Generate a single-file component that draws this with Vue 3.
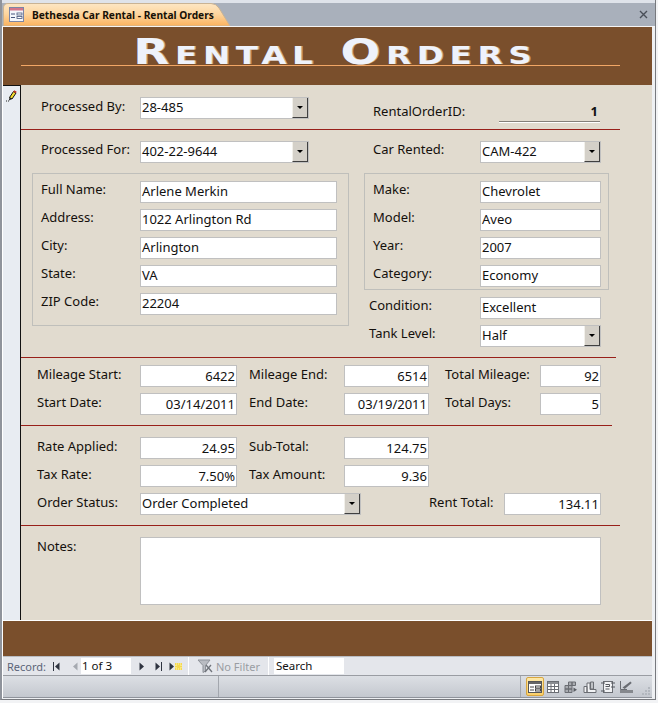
<script setup>
const personFields = [
  { label: 'Full Name:', value: 'Arlene Merkin' },
  { label: 'Address:', value: '1022 Arlington Rd' },
  { label: 'City:', value: 'Arlington' },
  { label: 'State:', value: 'VA' },
  { label: 'ZIP Code:', value: '22204' },
]
const carFields = [
  { label: 'Make:', value: 'Chevrolet' },
  { label: 'Model:', value: 'Aveo' },
  { label: 'Year:', value: '2007' },
  { label: 'Category:', value: 'Economy' },
]
const mileage = [
  ['Mileage Start:', '6422', 'Mileage End:', '6514', 'Total Mileage:', '92'],
  ['Start Date:', '03/14/2011', 'End Date:', '03/19/2011', 'Total Days:', '5'],
]
const rates = [
  ['Rate Applied:', '24.95', 'Sub-Total:', '124.75'],
  ['Tax Rate:', '7.50%', 'Tax Amount:', '9.36'],
]
</script>

<template>
  <div class="window">
    <div class="tabstrip">
      <div class="tab">
        <svg class="tab-bg" width="228" height="23" viewBox="0 0 228 23">
          <defs>
            <linearGradient id="tabgrad" x1="0" y1="0" x2="0" y2="1">
              <stop offset="0" stop-color="#fde6c4" />
              <stop offset="0.45" stop-color="#fdd6a0" />
              <stop offset="1" stop-color="#fbb25e" />
            </linearGradient>
          </defs>
          <path d="M0.5 23V5Q0.5 0.5 5 0.5H208Q213 0.5 216 5L227 23Z" fill="url(#tabgrad)" stroke="#c9b394" />
        </svg>
        <svg class="tab-icon" width="15" height="15" viewBox="0 0 15 15">
          <rect x="0.5" y="0.5" width="14" height="14" fill="#f4f6fb" stroke="#7b86a6" />
          <rect x="1" y="1" width="13" height="2.500" fill="#d3758a" />
          <path d="M2 7h4M2 10.500h4" stroke="#47557c" />
          <rect x="8" y="6" width="5" height="2" fill="#fff" stroke="#47557c" stroke-width="0.8" />
          <rect x="8" y="9.500" width="5" height="2" fill="#fff" stroke="#47557c" stroke-width="0.8" />
        </svg>
        <span class="tab-title">Bethesda Car Rental - Rental Orders</span>
      </div>
      <svg class="close" width="9" height="9" viewBox="0 0 9 9">
        <path d="M1 1l7 7M8 1l-7 7" stroke="#4a4f58" stroke-width="1.4" />
      </svg>
    </div>

    <div class="form">
      <header class="form-head">
        <h1 class="title">Rental Orders</h1>
        <div class="head-rule"></div>
      </header>

      <div class="detail">
        <aside class="selector">
          <svg width="11" height="12" viewBox="0 0 11 12">
            <path d="M3.500 7.500L7.500 1.500l2.500 1.500-4 6z" fill="#f6dc2e" stroke="#111" stroke-width="1" />
            <path d="M7.800 1l2.500 1.500" stroke="#c03020" stroke-width="1.600" />
            <path d="M3.500 7.500L3 10.500l2.800-1.500z" fill="#111" />
            <path d="M0 11h1M2 11h1" stroke="#222" />
          </svg>
        </aside>

        <main class="content">
          <section class="sec sec-a line-a">
            <div class="row col-left">
              <label class="lab lab-99">Processed By:</label>
              <div class="combo w-169"><span class="val">28-485</span><span class="drop"></span></div>
            </div>
            <div class="row order-id">
              <label class="lab lab-126">RentalOrderID:</label>
              <div class="id-value">1</div>
            </div>
          </section>

          <section class="sec sec-b line-b">
            <div class="left">
              <div class="row indent-20">
                <label class="lab lab-99">Processed For:</label>
                <div class="combo w-169"><span class="val">402-22-9644</span><span class="drop"></span></div>
              </div>
              <div class="group group-person">
                <div v-for="f in personFields" :key="f.label" class="row">
                  <label class="lab lab-99">{{ f.label }}</label>
                  <div class="field w-197">{{ f.value }}</div>
                </div>
              </div>
            </div>
            <div class="right">
              <div class="row indent-9">
                <label class="lab lab-107">Car Rented:</label>
                <div class="combo w-121"><span class="val">CAM-422</span><span class="drop"></span></div>
              </div>
              <div class="group group-car">
                <div v-for="f in carFields" :key="f.label" class="row">
                  <label class="lab lab-107">{{ f.label }}</label>
                  <div class="field w-121">{{ f.value }}</div>
                </div>
              </div>
              <div class="row indent-5 cond">
                <label class="lab lab-111">Condition:</label>
                <div class="field w-121">Excellent</div>
              </div>
              <div class="row indent-5 tank">
                <label class="lab lab-111">Tank Level:</label>
                <div class="combo w-121"><span class="val">Half</span><span class="drop"></span></div>
              </div>
            </div>
          </section>

          <section class="sec sec-c line-c">
            <div v-for="r in mileage" :key="r[0]" class="row">
              <label class="lab lab-103">{{ r[0] }}</label>
              <div class="field num w-97">{{ r[1] }}</div>
              <label class="lab lab-mid">{{ r[2] }}</label>
              <div class="field num w-85">{{ r[3] }}</div>
              <label class="lab lab-last">{{ r[4] }}</label>
              <div class="field num w-61">{{ r[5] }}</div>
            </div>
          </section>

          <section class="sec sec-d line-d">
            <div v-for="r in rates" :key="r[0]" class="row">
              <label class="lab lab-103">{{ r[0] }}</label>
              <div class="field num w-97">{{ r[1] }}</div>
              <label class="lab lab-mid">{{ r[2] }}</label>
              <div class="field num w-85">{{ r[3] }}</div>
            </div>
            <div class="row">
              <label class="lab lab-103">Order Status:</label>
              <div class="combo w-221"><span class="val">Order Completed</span><span class="drop"></span></div>
              <label class="lab lab-rent">Rent Total:</label>
              <div class="field num w-97">134.11</div>
            </div>
          </section>

          <section class="sec sec-e">
            <label class="lab lab-103 notes-lab">Notes:</label>
            <div class="notes"></div>
          </section>
        </main>
      </div>

      <div class="form-foot"></div>

      <nav class="navbar">
        <span class="rec">Record:</span>
        <svg class="nav-i first" width="7" height="9" viewBox="0 0 7 9"><path d="M0.5 0v9" stroke="#2f3440" /><path d="M6.500 0.500v8L2 4.500z" fill="#2f3440" /></svg>
        <svg class="nav-i prev" width="6" height="9" viewBox="0 0 6 9"><path d="M5.500 0.500v8L1 4.500z" fill="#a5a9b0" /></svg>
        <div class="rec-box">1 of 3</div>
        <svg class="nav-i next" width="6" height="9" viewBox="0 0 6 9"><path d="M0.500 0.500v8L5 4.500z" fill="#2f3440" /></svg>
        <svg class="nav-i last" width="7" height="9" viewBox="0 0 7 9"><path d="M0.500 0.500v8L5 4.500z" fill="#2f3440" /><path d="M6.500 0v9" stroke="#2f3440" /></svg>
        <svg class="nav-i new" width="13" height="9" viewBox="0 0 13 9"><path d="M0.500 0.500v8L5 4.500z" fill="#2f3440" /><rect x="6" y="1" width="7" height="7" fill="#f5d94f" /><path d="M7 2h5v5H7z" fill="none" stroke="#fff6b8" stroke-dasharray="1 1" /></svg>
        <span class="nav-sep sep-a"></span>
        <svg class="funnel" width="17" height="14" viewBox="0 0 17 14"><path d="M1 1h12L8.500 6.500V12L6 13.500V6.500z" fill="#b9bcc2" stroke="#8e9299" /><path d="M9 6l6 7M14 6l-6 7" stroke="#70747b" stroke-width="1.3" /></svg>
        <span class="nofilter">No Filter</span>
        <span class="nav-sep sep-b"></span>
        <div class="search">Search</div>
      </nav>

      <footer class="status">
        <span class="st-sep st-a"></span>
        <span class="st-sep st-b"></span>
        <div class="views">
          <span class="view active">
            <svg width="14" height="12" viewBox="0 0 14 12"><rect x="0.500" y="0.500" width="13" height="11" fill="#fff" stroke="#555" /><rect x="1" y="1" width="12" height="2" fill="#666" /><path d="M2 6h4M2 9h4" stroke="#444" /><rect x="7.500" y="5" width="5" height="2" fill="none" stroke="#444" /><rect x="7.500" y="8" width="5" height="2" fill="none" stroke="#444" /></svg>
          </span>
          <span class="view">
            <svg width="12" height="12" viewBox="0 0 12 12"><rect x="0.500" y="0.500" width="11" height="11" fill="#fff" stroke="#6a6d73" /><rect x="1" y="1" width="10" height="2" fill="#8a8d92" /><path d="M1 5.500h10M1 8.500h10M4 3v8M7.500 3v8" stroke="#6a6d73" /></svg>
          </span>
          <span class="view">
            <svg width="14" height="12" viewBox="0 0 14 12"><path d="M1 4.500h3.500v3.500H1zM4.500 4.500H8v3.500H4.500zM1 8h3.500v3.500H1zM4.500 8H8v3.500H4.500zM4.500 1H8v3.500H4.500zM8 1h3.500v3.500H8z" fill="#a9acb1" stroke="#6a6d73" /><path d="M9.500 6.500v4.500l3.500-2.300z" fill="#5a5d63" /></svg>
          </span>
          <span class="view">
            <svg width="14" height="12" viewBox="0 0 14 12"><path d="M1 11.500V5.500h3V11.500zM4 11.500V2h3V8.500h6v3z" fill="#f2f3f5" stroke="#6a6d73" /><path d="M7.500 1h3v7h-3z" fill="#bfc2c6" stroke="#6a6d73" /></svg>
          </span>
          <span class="view">
            <svg width="14" height="12" viewBox="0 0 14 12"><rect x="2.500" y="0.500" width="9" height="11" fill="#f2f3f5" stroke="#6a6d73" /><path d="M0 2h4M0 10h4M10 2h4M10 6h4M4.500 3.500h4v2h-4M4.500 8h4" fill="none" stroke="#55585e" /></svg>
          </span>
          <span class="view">
            <svg width="14" height="12" viewBox="0 0 14 12"><path d="M1.500 0v8.500H8" fill="none" stroke="#6a6d73" /><path d="M3.500 6.500L11.500 0.500l1.200 1.500-7 6z" fill="#6a6d73" /><rect x="1" y="9" width="13" height="3" fill="#85888d" /></svg>
          </span>
        </div>
        <svg class="grip" width="11" height="11" viewBox="0 0 11 11"><path d="M8 1h2v2H8zM5 4h2v2H5zM8 4h2v2H8zM2 7h2v2H2zM5 7h2v2H5zM8 7h2v2H8z" fill="#b2b7be" /></svg>
      </footer>
    </div>
  </div>
</template>

<style>
html, body { margin: 0; background: #f2f3f5; }
</style>

<style scoped>
* { box-sizing: border-box; }
.window {
  width: 656px;
  height: 700px;
  background: #eef0f3;
  border-left: 2px solid #8f939b;
  border-right: 1px solid #77797e;
  border-bottom: 1px solid #77797e;
  font-family: "Noto Sans", sans-serif;
  font-size: 13px;
  color: #111;
  overflow: hidden;
}
.tabstrip {
  height: 27px;
  padding-top: 3px;
  position: relative;
  background: linear-gradient(#dfe3ea 0, #dfe3ea 3px, #a9b0bb 3px);
  border-bottom: 1px solid #f5f5f5;
}
.tab {
  position: relative;
  width: 228px;
  height: 23px;
  display: flex;
  align-items: center;
  margin-left: 1px;
}
.tab-bg { position: absolute; left: 0; top: 0; }
.tab-icon { position: relative; margin-left: 6px; }
.tab-title {
  position: relative;
  margin-left: 8px;
  font-weight: 700;
  font-size: 10.2px;
  color: #161006;
  white-space: nowrap;
}
.close { position: absolute; right: 7px; top: 10px; }

.form {
  width: 650px;
  border-left: 1px solid #fff;
  background: #e1dbcf;
}
.form-head {
  height: 58px;
  background: #7a4f2c;
  position: relative;
  overflow: hidden;
}
.title {
  margin: 0;
  width: 100%;
  text-align: center;
  font-family: "DejaVu Sans", sans-serif;
  font-weight: 700;
  font-variant: small-caps;
  font-size: 36px;
  line-height: 38px;
  padding: 6px 0 0 12px;
  letter-spacing: 4.4px;
  color: #eef2fb;
  text-shadow: 1px 0 0 #c9a27d;
  transform: scaleX(1.3);
  white-space: nowrap;
}
.head-rule {
  position: absolute;
  left: 18px;
  width: 599px;
  top: 38px;
  height: 1px;
  background: #f2a766;
}
.detail { display: flex; height: 535px; }
.selector {
  width: 18px;
  background: #e8ecf2;
  border-top: 1px solid #111;
  border-right: 1px solid #111;
  padding: 2px 0 0 3px;
  flex: none;
}
.content { flex: 1; min-width: 0; }

.sec { position: relative; }
.sec::after {
  content: "";
  position: absolute;
  left: 0;
  bottom: 0;
  height: 1px;
  background: #98201a;
}
.line-a::after { width: 599px; }
.line-b::after { width: 595px; }
.line-c::after { width: 591px; }
.line-d::after { width: 599px; }

.sec-a { height: 45px; padding: 12px 0 0 20px; display: flex; }
.col-left { width: 332px; }
.sec-b { height: 228px; padding-top: 11px; display: flex; }
.left { width: 328px; }
.right { margin-left: 15px; }
.sec-c { height: 68px; padding: 7px 0 0 16px; display: flex; flex-direction: column; gap: 6px; }
.sec-d { height: 100px; padding: 11px 0 0 16px; display: flex; flex-direction: column; gap: 6px; }
.sec-e { padding: 11px 0 0 16px; display: flex; }

.row { display: flex; height: 22px; flex: none; }
.indent-20 { padding-left: 20px; }
.indent-9 { padding-left: 9px; }
.indent-5 { padding-left: 5px; }
.cond { margin-top: 7px; }
.tank { margin-top: 6px; }

.lab {
  line-height: 19px;
  white-space: nowrap;
  flex: none;
  color: #14100c;
}
.sec-b .lab { line-height: 17px; }
.lab-99 { width: 99px; }
.lab-103 { width: 103px; }
.lab-107 { width: 107px; }
.lab-111 { width: 111px; }
.lab-126 { width: 126px; line-height: 28px; }
.lab-mid { width: 107px; padding-left: 12px; }
.lab-last { width: 111px; padding-left: 16px; }
.lab-rent { width: 143px; padding-left: 68px; }
.notes-lab { line-height: 18px; }

.field, .combo {
  height: 22px;
  background: #fff;
  border: 1px solid #c0c0c0;
  line-height: 18px;
  padding: 0 1px;
  white-space: nowrap;
  flex: none;
  color: #111;
}
.num { text-align: right; line-height: 20px; }
.combo { display: flex; justify-content: space-between; }
.w-61 { width: 61px; }
.w-85 { width: 85px; }
.w-97 { width: 97px; }
.w-121 { width: 121px; }
.w-169 { width: 169px; }
.w-197 { width: 197px; }
.w-221 { width: 221px; }

.drop {
  width: 16px;
  height: 20px;
  background: #d4d0c8;
  border-right: 1px solid #404040;
  border-bottom: 1px solid #404040;
  border-left: 1px solid #f2f0ea;
  position: relative;
  flex: none;
  margin-right: -1px;
}
.drop::after {
  content: "";
  position: absolute;
  left: 4px;
  top: 8px;
  border-left: 3px solid transparent;
  border-right: 3px solid transparent;
  border-top: 3px solid #000;
}
.id-value {
  width: 101px;
  height: 25px;
  text-align: right;
  font-weight: 700;
  line-height: 28px;
  padding-right: 2px;
  border-bottom: 1px solid #84807a;
  box-shadow: 0 1px 0 #fff;
}

.group {
  border: 1px solid #bfbfbb;
  margin-top: 10px;
  display: flex;
  flex-direction: column;
  gap: 6px;
  padding: 7px 0 0 8px;
}
.group-person { margin-left: 11px; width: 317px; height: 153px; }
.group-car { width: 245px; height: 117px; }

.notes {
  width: 461px;
  height: 68px;
  background: #fff;
  border: 1px solid #c0c0c0;
}

.form-foot {
  height: 36px;
  background: #7a4f2c;
  border-top: 1px solid #fff;
}
.navbar {
  height: 20px;
  background: #e4e6eb;
  border-top: 1px solid #b9bcc2;
  border-bottom: 1px solid #9a9da3;
  position: relative;
  display: flex;
  align-items: center;
  font-size: 11px;
  padding-left: 4px;
}
.rec { color: #5b6478; width: 46px; flex: none; }
.nav-i { flex: none; }
.prev { margin-left: 12px; }
.rec-box {
  margin-left: 3px;
  width: 50px;
  height: 16px;
  background: #fff;
  color: #111;
  line-height: 15px;
  padding-left: 1px;
  font-size: 11.5px;
  flex: none;
}
.next { margin-left: 8px; }
.last { margin-left: 10px; }
.new { margin-left: 7px; }
.nav-sep { width: 1px; height: 18px; background: #fff; flex: none; }
.sep-a { margin-left: 6px; }
.funnel { margin-left: 8px; flex: none; }
.nofilter { color: #9a9da3; width: 52px; margin-left: 2px; flex: none; font-size: 11px; }
.search {
  margin-left: 5px;
  width: 70px;
  height: 16px;
  background: #fff;
  line-height: 15px;
  padding-left: 2px;
  color: #111;
  font-size: 11.5px;
  flex: none;
}

.status {
  height: 22px;
  background: linear-gradient(#dcdfe4, #c4c8cf);
  border-bottom: 1px solid #8f939b;
  display: flex;
  align-items: center;
  position: relative;
  padding-left: 215px;
}
.st-sep { width: 1px; height: 21px; background: #a3a7ae; flex: none; }
.st-b { margin-left: 301px; }
.views { display: flex; margin-left: 5px; }
.view {
  width: 18.2px;
  height: 19px;
  display: flex;
  align-items: center;
  justify-content: center;
  flex: none;
}
.view.active {
  background: linear-gradient(#fde8a8, #fbd069);
  border: 1px solid #d8a640;
  border-radius: 2px;
}
.grip { position: absolute; right: 1px; bottom: 0; }
</style>
